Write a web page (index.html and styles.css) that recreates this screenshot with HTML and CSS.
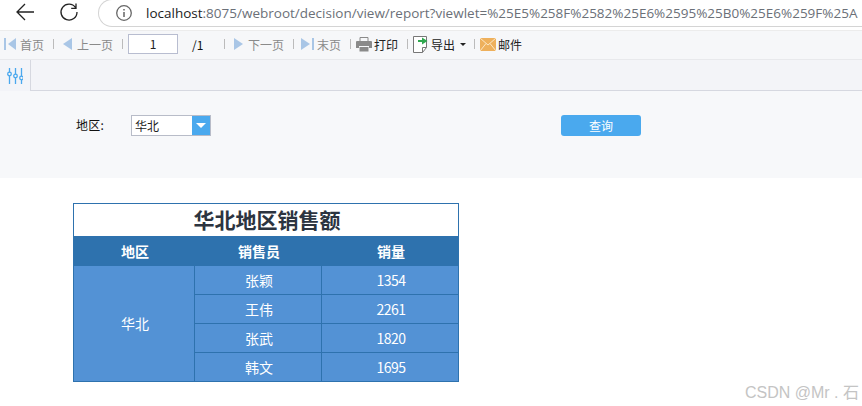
FILE: index.html
```html
<!DOCTYPE html>
<html lang="zh">
<head>
<meta charset="utf-8">
<title>华北地区销售额</title>
<link rel="stylesheet" href="styles.css">
</head>
<body>
<header class="browser">
  <svg class="nav-back" width="26" height="24" viewBox="0 0 26 24"><path d="M24 12H8M15 4l-8 8 8 8" fill="none" stroke="#222" stroke-width="1.300"/></svg>
  <svg class="nav-reload" width="20" height="20" viewBox="0 0 20 20"><path d="M16.600 5.600A8 8 0 1 0 18 10M17 1.500v4.800h-4.800" fill="none" stroke="#222" stroke-width="1.300"/></svg>
  <div class="url">
    <svg class="info" width="18" height="18" viewBox="0 0 18 18"><circle cx="9" cy="9" r="7.300" fill="none" stroke="#666" stroke-width="1.300"/><path d="M9 8v5M9 5v1.500" stroke="#666" stroke-width="1.500"/></svg>
    <span class="host">localhost</span><span class="path">:8075/webroot/decision/view/report?viewlet=%25E5%258F%2582%25E6%2595%25B0%25E6%259F%25A</span>
  </div>
</header>

<nav class="toolbar">
  <span class="tool muted gap-1">
    <svg width="15" height="14" viewBox="0 0 15 14"><path d="M0 1h2v12H0z" fill="#a9c6e6"/><path d="M12 1v12L4 7z" fill="#a9c6e6"/></svg>首页
  </span>
  <i class="sep"></i>
  <span class="tool muted gap-5">
    <svg width="9" height="14" viewBox="0 0 9 14"><path d="M9 1v12L0 7z" fill="#a9c6e6"/></svg>上一页
  </span>
  <i class="sep sep-tight"></i>
  <span class="page-input">1</span>
  <span class="page-total">/1</span>
  <i class="sep sep-flush"></i>
  <span class="tool muted gap-5">
    <svg width="9" height="14" viewBox="0 0 9 14"><path d="M0 1v12l9-6z" fill="#a9c6e6"/></svg>下一页
  </span>
  <i class="sep sep-mid"></i>
  <span class="tool muted gap-3">
    <svg width="13" height="14" viewBox="0 0 13 14"><path d="M0 1v12l9-6z" fill="#a9c6e6"/><path d="M11 1h2v12h-2z" fill="#a9c6e6"/></svg>末页
  </span>
  <i class="sep sep-tight"></i>
  <span class="tool">
    <svg width="16" height="15" viewBox="0 0 16 15"><path d="M4 .5h8v4H4z" fill="none" stroke="#8a8a8a"/><path d="M1 4h14q1 0 1 1v6h-3V9H3v2H0V5q0-1 1-1z" fill="#8a8a8a"/><path d="M3.500 10h9v4.500h-9z" fill="#8a8a8a"/></svg>打印
  </span>
  <i class="sep sep-tight"></i>
  <span class="tool gap-3">
    <svg width="15" height="17" viewBox="0 0 15 17"><path d="M.5.5h13v11l-4 5h-9zM9.500 16.500v-5h4" fill="#fff" stroke="#777"/><path d="M5 4h4V1.500L14.500 5 9 8.500V6H5z" fill="#2fa84f"/></svg>导出
    <svg class="caret" width="6" height="3" viewBox="0 0 6 3"><path d="M0 0h6L3 3z" fill="#222"/></svg>
  </span>
  <i class="sep sep-tight sep-short"></i>
  <span class="tool">
    <svg width="16" height="13" viewBox="0 0 16 13"><path d="M0 0h16v13H0z" fill="#eeb05c"/><path d="M0 0l8 7 8-7M0 13l6-7.500M16 13l-6-7.500" fill="none" stroke="#fbe6c4"/></svg>邮件
  </span>
</nav>

<div class="tabbar">
  <div class="tab">
    <svg width="16" height="16" viewBox="0 0 16 16"><g stroke="#4aa8ee" stroke-width="1.300" fill="#f3f4f8"><path d="M2.500 0v16M8.500 0v16M14.500 0v16" fill="none"/><circle cx="2.500" cy="6" r="1.800"/><circle cx="8.500" cy="8" r="1.800"/><circle cx="14.500" cy="10" r="1.800"/></g></svg>
  </div>
</div>

<form class="params">
  <label class="param-label">地区:</label>
  <div class="combo">
    <span class="combo-value">华北</span>
    <span class="combo-btn"><svg width="10" height="5" viewBox="0 0 10 5"><path d="M0 0h10L5 5z" fill="#fff"/></svg></span>
  </div>
  <button type="button" class="query">查询</button>
</form>

<main class="report">
  <table class="sales">
    <colgroup><col class="c1"><col class="c2"><col class="c3"></colgroup>
    <tr class="title"><th colspan="3">华北地区销售额</th></tr>
    <tr class="head"><th>地区</th><th>销售员</th><th>销量</th></tr>
    <tr><td rowspan="4">华北</td><td>张颖</td><td class="num">1354</td></tr>
    <tr><td>王伟</td><td class="num">2261</td></tr>
    <tr><td>张武</td><td class="num">1820</td></tr>
    <tr><td>韩文</td><td class="num">1695</td></tr>
  </table>
</main>

<div class="watermark">CSDN @Mr . 石</div>
</body>
</html>
```

FILE: styles.css
```css
* { box-sizing: border-box; }
html, body { margin: 0; height: 100%; overflow: hidden; }
body {
  position: relative;
  background: #fff;
  font-family: "Noto Sans CJK SC", "Liberation Sans", sans-serif;
  font-size: 12px;
  color: #222;
}
.browser {
  height: 31px;
  display: flex;
  align-items: flex-start;
  background: #fff;
  overflow: hidden;
  border-bottom: 1px solid #ececec;
}
.nav-back { margin: 0 0 0 10px; flex: none; }
.nav-reload { margin: 2px 0 0 23px; flex: none; }
.url {
  flex: none;
  width: 900px;
  height: 28px;
  margin: -1px 0 0 19px;
  padding-left: 16px;
  display: flex;
  align-items: center;
  border: 1px solid #d4d4d4;
  border-right: 0;
  border-top-left-radius: 20px;
  border-bottom-left-radius: 20px;
  font-family: "Open Sans", "Liberation Sans", sans-serif;
  font-size: 13.500px;
  white-space: nowrap;
}
.info { margin-right: 13px; flex: none; }
.host { color: #222; }
.path { color: #6b7078; }

.toolbar {
  height: 29px;
  display: flex;
  align-items: center;
  padding: 0 0 2px 4px;
  background: #f6f7f9;
  border-bottom: 1px solid #e8e9ec;
  white-space: nowrap;
}
.tool { display: flex; align-items: center; gap: 2px; }
.gap-1 { gap: 1px; }
.gap-3 { gap: 3px; }
.gap-5 { gap: 5px; }
.muted { color: #8a8a8a; }
.sep { width: 1px; height: 10px; margin: 0 9px; background: #bbb; flex: none; }
.sep-tight { margin-right: 5px; }
.sep-mid { margin-right: 7px; }
.sep-flush { margin-left: 0; }
.sep-short { margin-left: 8px; }
.page-input {
  width: 50px;
  height: 20px;
  border: 1px solid #b8bdd0;
  background: #fff;
  text-align: center;
  line-height: 18px;
  font-size: 12px;
}
.page-total { width: 46px; padding-left: 14px; color: #111; }
.caret { margin-left: 2px; }

.tabbar {
  height: 31px;
  background: #f3f4f8;
  border-bottom: 1px solid #d6d8e0;
}
.tab {
  width: 31px;
  height: 31px;
  display: flex;
  align-items: center;
  justify-content: center;
  background: #f3f4f8;
  border-right: 1px solid #d6d8e0;
}
.params {
  height: 87px;
  display: flex;
  align-items: flex-start;
  padding: 24px 0 0 76px;
  background: #f7f8fa;
}
.param-label { width: 55px; line-height: 20px; color: #111; letter-spacing: .3px; }
.combo {
  width: 80px;
  height: 21px;
  display: flex;
  border: 1px solid #b8bcc8;
  background: #fff;
}
.combo-value { flex: 1; padding-left: 3px; line-height: 19px; color: #222; }
.combo-btn {
  width: 18px;
  display: flex;
  align-items: center;
  justify-content: center;
  background: #4aa9ee;
}
.query {
  width: 80px;
  height: 21px;
  margin: 0 0 0 350px;
  padding: 0;
  border: 0;
  border-radius: 3px;
  background: #4aa9ee;
  color: #fff;
  font: inherit;
}

.report { padding: 25px 0 0 73px; }
.sales {
  width: 385px;
  table-layout: fixed;
  border-collapse: collapse;
  text-align: center;
  color: #fff;
  font-size: 14px;
}
.c1 { width: 121px; }
.c2 { width: 127px; }
.c3 { width: 137px; }
.sales th, .sales td {
  padding: 0 0 1px 2px;
  border: 1px solid #2e72ae;
  font-weight: 400;
}
.sales td { height: 29px; background: #5392d5; }
.sales .num { letter-spacing: -.5px; }
.sales .title th {
  height: 33px;
  padding-bottom: 2px;
  background: #fff;
  color: #2c3440;
  font-size: 21px;
  font-weight: 700;
}
.sales .head th {
  height: 29px;
  background: #2e72ae;
  font-weight: 700;
}
.watermark {
  position: absolute;
  right: 3px;
  bottom: 3px;
  font-family: "Liberation Sans", "Noto Sans CJK SC", sans-serif;
  font-size: 16px;
  color: #c4c4c4;
}
```
